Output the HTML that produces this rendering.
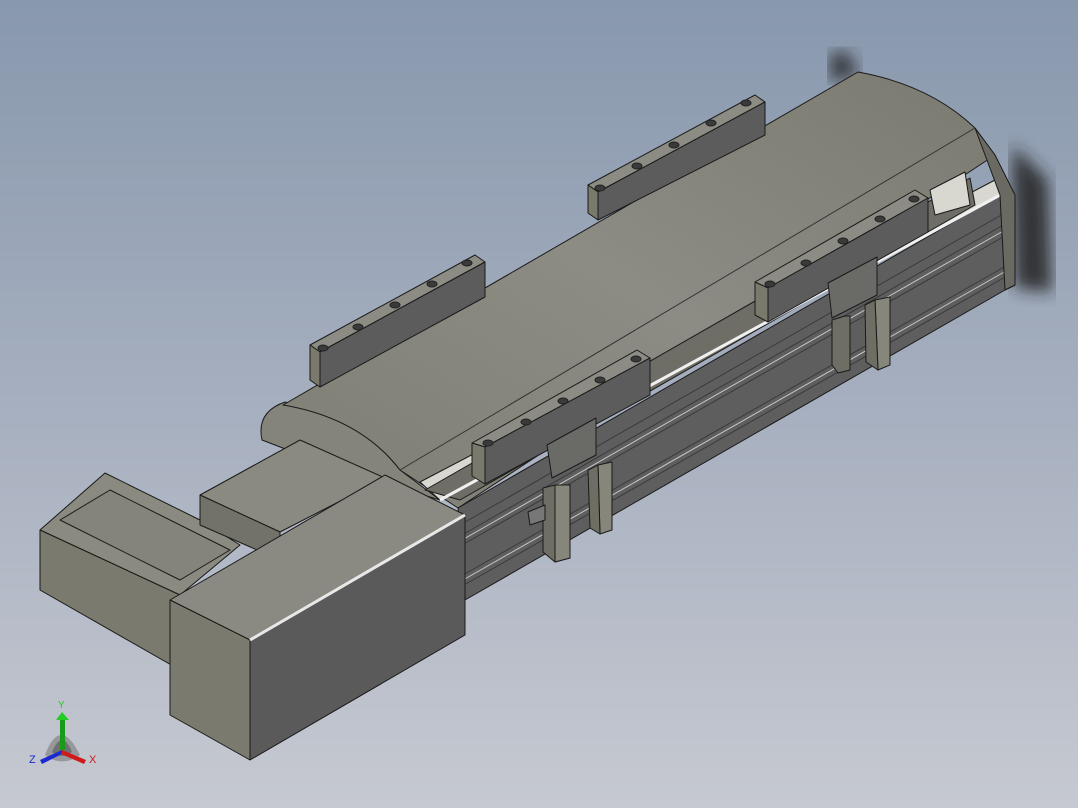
<!DOCTYPE html><html><head><style>html,body{margin:0;padding:0;width:1078px;height:808px;overflow:hidden}
body{background:linear-gradient(180deg,#8898ad 0%,#a6afbf 50%,#c6c9d1 100%);font-family:"Liberation Sans",sans-serif}</style></head><body>
<svg width="1078" height="808" viewBox="0 0 1078 808" xmlns="http://www.w3.org/2000/svg" stroke="#1a1a1a" stroke-width="1" stroke-linejoin="round">
<defs>
<linearGradient id="top" x1="0" y1="1" x2="1" y2="0"><stop offset="0" stop-color="#7e7e74"/><stop offset="0.5" stop-color="#8c8c84"/><stop offset="1" stop-color="#7a7a70"/></linearGradient>
<filter id="bl"><feGaussianBlur stdDeviation="8"/></filter>
</defs>
<polygon points="830,55 845,50 860,75 830,82" fill="#222" opacity="0.8" filter="url(#bl)" stroke="none"/>
<polygon points="1012,145 1048,180 1052,292 1015,288" fill="#222" opacity="0.85" filter="url(#bl)" stroke="none"/>
<!-- left end face of cover -->
<path d="M262,440 Q256,412 285,402 Q360,418 400,470 L440,500 L340,470 Z" fill="#84847a"/>
<!-- main top surface -->
<path d="M283,405 L858,72 Q930,85 975,128 L995,155 L458,508 L400,470 Q360,418 283,405 Z" fill="url(#top)"/>
<path d="M400,470 L975,128" fill="none" stroke="#333"/>
<polygon points="420,482 995,180 1000,195 440,500" fill="#d8d8d0"/>
<polygon points="425,490 970,178 975,205 460,500" fill="#6e6e66"/>
<polygon points="458,508 1000,195 1015,200 1015,285 1005,290 465,600" fill="#5e5e5e"/>
<path d="M460,525 L1010,210 M462,535 L1012,220 M462,545 L1012,232 M463,575 L1013,262 M464,585 L1014,272" stroke="#3a3a3a" fill="none"/>
<path d="M462,540 L1012,226 M463,580 L1013,267" stroke="#c8c8c8" fill="none"/>
<path d="M440,500 L1000,195" stroke="#f0f0f0" stroke-width="3"/>
<polygon points="975,128 995,155 1015,195 1015,285 1005,290 1000,195" fill="#6a6a62"/>
<polygon points="930,190 965,172 970,205 935,215" fill="#d8d8d0"/>
<g>
<polygon points="310,345 475,255 485,262 320,352" fill="#8c8c84"/>
<polygon points="320,352 485,262 485,297 320,387" fill="#5c5c5c"/>
<polygon points="310,345 320,352 320,387 310,380" fill="#7a7a6c"/>
</g>
<g>
<polygon points="588,185 755,95 765,102 598,192" fill="#8c8c84"/>
<polygon points="598,192 765,102 765,135 598,220" fill="#5c5c5c"/>
<polygon points="588,185 598,192 598,220 588,213" fill="#7a7a6c"/>
</g>
<g>
<polygon points="472,443 637,350 650,358 485,447" fill="#8c8c84"/>
<polygon points="485,447 650,358 650,395 485,484" fill="#5c5c5c"/>
<polygon points="472,443 485,447 485,484 472,476" fill="#7a7a6c"/>
</g>
<g>
<polygon points="755,282 915,190 928,198 768,288" fill="#8c8c84"/>
<polygon points="768,288 928,198 928,232 768,322" fill="#5c5c5c"/>
<polygon points="755,282 768,288 768,322 755,315" fill="#7a7a6c"/>
</g>
<g fill="#3a3a3a" stroke="#222">
<ellipse cx="323" cy="348" rx="5" ry="3"/><ellipse cx="358" cy="327" rx="5" ry="3"/><ellipse cx="395" cy="305" rx="5" ry="3"/><ellipse cx="432" cy="284" rx="5" ry="3"/><ellipse cx="467" cy="263" rx="5" ry="3"/>
<ellipse cx="600" cy="188" rx="5" ry="3"/><ellipse cx="637" cy="166" rx="5" ry="3"/><ellipse cx="674" cy="145" rx="5" ry="3"/><ellipse cx="711" cy="123" rx="5" ry="3"/><ellipse cx="746" cy="103" rx="5" ry="3"/>
<ellipse cx="488" cy="443" rx="5" ry="3"/><ellipse cx="526" cy="422" rx="5" ry="3"/><ellipse cx="563" cy="401" rx="5" ry="3"/><ellipse cx="600" cy="380" rx="5" ry="3"/><ellipse cx="636" cy="359" rx="5" ry="3"/>
<ellipse cx="770" cy="284" rx="5" ry="3"/><ellipse cx="806" cy="263" rx="5" ry="3"/><ellipse cx="843" cy="241" rx="5" ry="3"/><ellipse cx="880" cy="219" rx="5" ry="3"/><ellipse cx="914" cy="199" rx="5" ry="3"/>
</g>
<g>
<polygon points="547,445 596,418 596,455 552,478" fill="#6a6a66"/>
<polygon points="543,488 555,485 570,485 570,558 555,562 543,552" fill="#6e6e64"/>
<polygon points="555,485 570,485 570,558 555,562" fill="#86867a"/>
<polygon points="598,465 612,462 612,530 600,534" fill="#86867a"/>
<polygon points="588,470 598,465 600,534 590,528" fill="#6e6e64"/>
<polygon points="528,512 545,505 545,520 530,525" fill="#777"/>
</g>
<g>
<polygon points="828,283 877,257 877,295 832,318" fill="#6a6a66"/>
<polygon points="832,320 845,316 850,316 850,370 838,373 832,365" fill="#6e6e64"/>
<polygon points="875,300 890,297 890,365 878,370" fill="#86867a"/>
<polygon points="865,305 875,300 878,370 866,362" fill="#6e6e64"/>
</g>
<polygon points="40,530 105,473 200,520 240,545 180,595" fill="#8a8a80"/>
<polygon points="60,520 110,490 230,550 180,580" fill="#84847a"/>
<polygon points="40,530 180,595 180,670 40,590" fill="#7a7a6e"/>
<polygon points="200,495 300,440 385,478 280,532" fill="#8a8a80"/>
<polygon points="200,495 280,532 280,560 200,525" fill="#727268"/>
<polygon points="170,600 385,475 465,515 250,640" fill="#8a8a82"/>
<polygon points="250,640 465,515 465,635 250,760" fill="#5a5a5a"/>
<polygon points="170,600 250,640 250,760 170,715" fill="#7a7a6e"/>
<path d="M250,640 L465,515" stroke="#e8e8e8" stroke-width="3"/>
<g stroke="none">
<path d="M45,755 Q60,715 80,755 Q62,768 45,755 Z" fill="#7a7a7a" opacity="0.6"/>
<path d="M52,752 Q62,728 72,752 Q62,760 52,752 Z" fill="#555" opacity="0.6"/>
<rect x="60" y="718" width="5" height="32" fill="#1a9a1a"/>
<polygon points="56,720 62,712 69,720" fill="#22cc22"/>
<polygon points="62,750 40,760 42,764 64,753" fill="#1a2ad0"/>
<polygon points="62,750 86,760 84,764 61,754" fill="#d01a1a"/>
</g>
<text x="58" y="708" font-size="10" fill="#22cc22" stroke="none">Y</text>
<text x="29" y="763" font-size="11" fill="#1a2ad0" stroke="none">Z</text>
<text x="89" y="763" font-size="11" fill="#d01a1a" stroke="none">X</text>
</svg>
</body></html>
